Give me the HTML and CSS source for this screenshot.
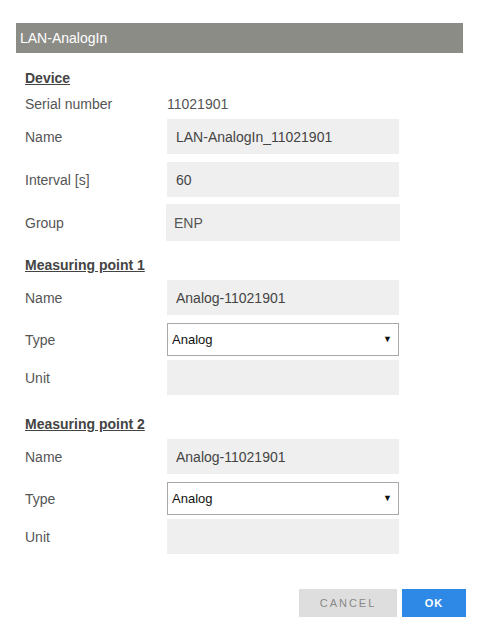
FILE: index.html
```html
<!DOCTYPE html>
<html lang="en">
<head>
    <meta charset="UTF-8">
    <meta name="viewport" content="width=device-width, initial-scale=1.0">
    <title>LAN-AnalogIn</title>
    <link rel="stylesheet" href="styles.css">
</head>
<body>

    <div class="dialog">
        <div class="dialog-title">LAN-AnalogIn</div>

        <form class="dialog-body">
            <h3 class="section-title first">Device</h3>

            <div class="row row-text">
                <label>Serial number</label>
                <span class="value">11021901</span>
            </div>
            <div class="row">
                <label for="dev_name">Name</label>
                <input type="text" id="dev_name" class="field" value="LAN-AnalogIn_11021901">
            </div>
            <div class="row">
                <label for="dev_interval">Interval [s]</label>
                <input type="text" id="dev_interval" class="field" value="60">
            </div>
            <div class="row row-group">
                <label for="dev_group">Group</label>
                <input type="text" id="dev_group" class="field field-group" value="ENP">
            </div>

            <h3 class="section-title">Measuring point 1</h3>

            <div class="row">
                <label for="mp1_name">Name</label>
                <input type="text" id="mp1_name" class="field" value="Analog-11021901">
            </div>
            <div class="row row-select">
                <label for="mp1_type">Type</label>
                <div class="select-wrap">
                    <select id="mp1_type" class="select">
                        <option>Analog</option>
                    </select>
                </div>
            </div>
            <div class="row row-unit">
                <label for="mp1_unit">Unit</label>
                <input type="text" id="mp1_unit" class="field">
            </div>

            <h3 class="section-title second">Measuring point 2</h3>

            <div class="row">
                <label for="mp2_name">Name</label>
                <input type="text" id="mp2_name" class="field" value="Analog-11021901">
            </div>
            <div class="row row-select">
                <label for="mp2_type">Type</label>
                <div class="select-wrap">
                    <select id="mp2_type" class="select">
                        <option>Analog</option>
                    </select>
                </div>
            </div>
            <div class="row row-unit">
                <label for="mp2_unit">Unit</label>
                <input type="text" id="mp2_unit" class="field">
            </div>

            <div class="actions">
                <button type="button" class="btn btn-cancel">Cancel</button>
                <button type="submit" class="btn btn-ok">OK</button>
            </div>
        </form>
    </div>

</body>
</html>
```

FILE: styles.css
```css
body { margin: 0; font-family: Arial, "Liberation Sans", sans-serif; font-size: 14px; color: #555; background: #fff; }

.dialog { margin: 23px 0 0 16px; width: 447px; }
.dialog-title { height: 30px; line-height: 31px; padding-left: 4px; background-color: #8c8c87; color: #fff; font-size: 14px; }

.dialog-body { padding-left: 9px; }

.section-title { margin: 0; font-size: 14px; line-height: 16px; font-weight: bold; color: #444; text-decoration: underline; }
.section-title.first { margin-top: 17px; }
.section-title { margin-top: 16px; }
.section-title.second { margin-top: 21px; }

.row { display: flex; align-items: center; margin-top: 7px; }
.row + .row { margin-top: 8px; }
.row label { width: 142px; flex-shrink: 0; }
.row-text { margin-top: 10px; height: 16px; }
.row-text .value { color: #555; }
.row-text + .row { margin-top: 7px; }
.row + .row-group { margin-top: 7px; }
.row-select + .row-unit { margin-top: 4px; }

.field { box-sizing: border-box; width: 232px; height: 35px; padding: 0 9px; border: none; background-color: #efefef; font-family: inherit; font-size: 14px; color: #444; outline: none; }
.field-group { width: 234px; height: 37px; margin-left: -1px; padding-left: 8px; color: #555; }

.select-wrap { position: relative; width: 232px; }
.select-wrap::after { content: "\25BC"; position: absolute; right: 7px; top: 11px; font-size: 9px; color: #111; pointer-events: none; }
.select { display: block; box-sizing: border-box; width: 232px; height: 33px; padding: 0 0 0 4px; border: 1px solid #a9a9a9; background: #fff; font-family: inherit; font-size: 13px; color: #111; -webkit-appearance: none; appearance: none; border-radius: 0; }

.actions { display: flex; justify-content: flex-end; gap: 5px; margin: 35px -3px 0 0; }
.btn { height: 28px; border: none; border-radius: 0; font-family: inherit; font-size: 11px; text-transform: uppercase; cursor: pointer; }
.btn-cancel { width: 98px; background-color: #dedede; color: #888; letter-spacing: 2px; }
.btn-ok { width: 64px; background-color: #2e88e6; color: #fff; font-weight: bold; letter-spacing: 1px; }
.btn-ok:hover { background-color: #2577d0; }
```
